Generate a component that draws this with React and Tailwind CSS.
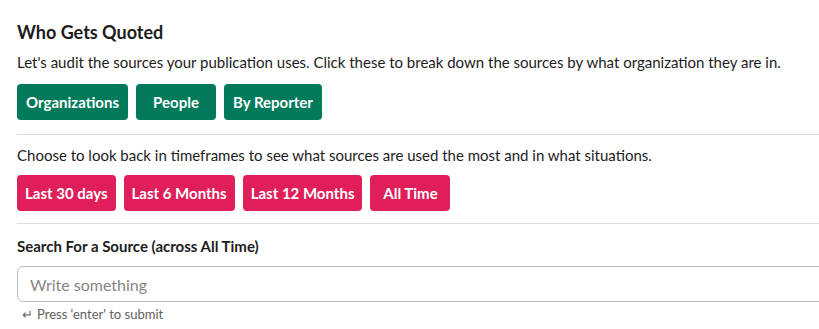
import React from "react";

const greenButtons = ["Organizations", "People", "By Reporter"];
const pinkButtons = ["Last 30 days", "Last 6 Months", "Last 12 Months", "All Time"];

function ActionButton({ label, tone }) {
  const color =
    tone === "green"
      ? "bg-[#007a5a] hover:bg-[#148567] px-[9px]"
      : "bg-[#e01e5a] hover:bg-[#e22a63] px-[8px]";
  return (
    <button
      className={`${color} h-[36px] min-w-[80px] rounded-[4px] text-[15px] font-bold text-white leading-none`}
    >
      {label}
    </button>
  );
}

export default function App() {
  return (
    <div
      className="w-[819px] h-[329px] overflow-hidden bg-white text-[#1d1c1d]"
      style={{ fontFamily: "Lato, 'Noto Sans', sans-serif" }}
    >
      <div className="w-[860px] pl-[17px] pt-[20px]">
        <h1 className="text-[18px] font-bold leading-[24px]">Who Gets Quoted</h1>

        <p className="mt-[7px] text-[15px] leading-[22px]">
          Let's audit the sources your publication uses. Click these to break down the sources by what organization they are in.
        </p>
        <div className="mt-[11px] flex gap-[8px]">
          {greenButtons.map((b) => (
            <ActionButton key={b} label={b} tone="green" />
          ))}
        </div>

        <div className="mt-[14px] border-t border-[#dddddd]" />

        <p className="mt-[9px] text-[15px] leading-[22px]">
          Choose to look back in timeframes to see what sources are used the most and in what situations.
        </p>
        <div className="mt-[9px] flex gap-[8px]">
          {pinkButtons.map((b) => (
            <ActionButton key={b} label={b} tone="pink" />
          ))}
        </div>

        <div className="mt-[12px] border-t border-[#dddddd]" />

        <label className="mt-[11px] block text-[15px] font-bold leading-[22px]">
          Search For a Source (across All Time)
        </label>
        <input
          className="mt-[9px] block h-[36px] w-[843px] rounded-[6px] border border-[#b9b9b9] px-[12px] text-[16px] placeholder:text-[#868686] outline-none"
          placeholder="Write something"
        />
        <div className="mt-[3px] pl-[5px] text-[13px] leading-[18px] text-[#616061]">
          <span className="mr-[4px]">↵</span>Press 'enter' to submit
        </div>
      </div>
    </div>
  );
}
